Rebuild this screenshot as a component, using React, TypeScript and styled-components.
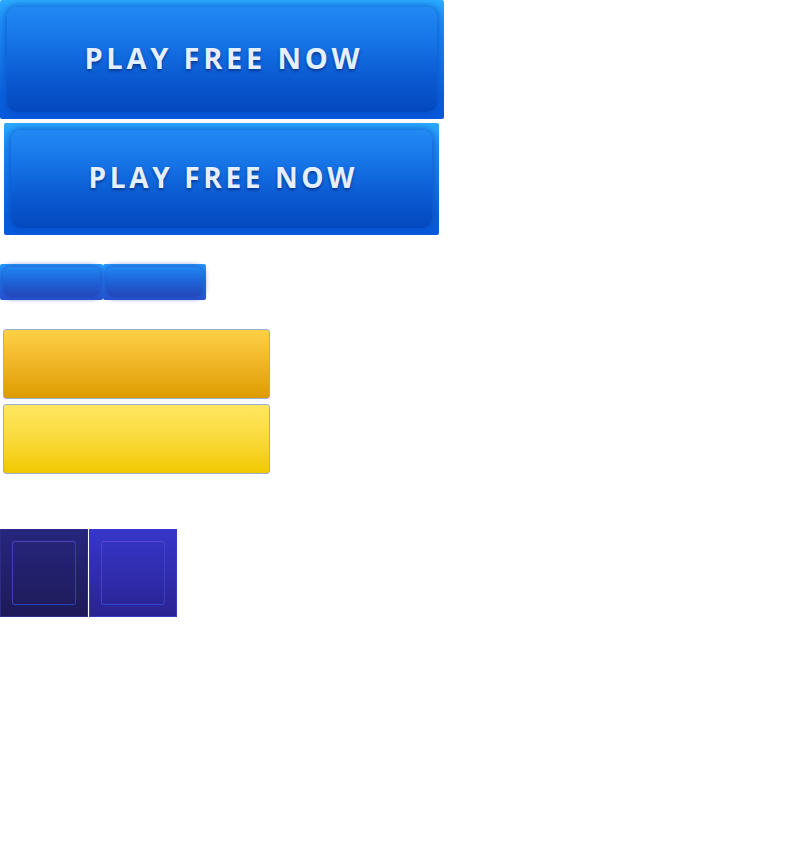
import styled, { createGlobalStyle } from "styled-components";

const GlobalStyle = createGlobalStyle`
  html, body {
    margin: 0;
    padding: 0;
    background: #ffffff;
    font-family: "Open Sans", "Noto Sans", sans-serif;
  }
`;

const Sheet = styled.div`
  display: flex;
  flex-direction: column;
  align-items: flex-start;
`;

const BigButton = styled.div<{ $w: number; $h: number; $mt: number; $ml: number; $size: number }>`
  box-sizing: border-box;
  width: ${({ $w }) => $w}px;
  height: ${({ $h }) => $h}px;
  margin-top: ${({ $mt }) => $mt}px;
  margin-left: ${({ $ml }) => $ml}px;
  padding: 7px;
  border-radius: 2px;
  background: linear-gradient(180deg, #2aabff 0%, #1e8cf6 20%, #0a62dc 80%, #0659dc 100%);
  display: flex;
  font-size: ${({ $size }) => $size}px;
`;

const BigInner = styled.div`
  flex: 1;
  border-radius: 10px;
  background: linear-gradient(180deg, #2289f4 0%, #1573e6 35%, #0a58d0 70%, #0448be 100%);
  box-shadow: 0 0 6px 2px rgba(8, 70, 190, 0.55);
  display: flex;
  align-items: center;
  justify-content: center;
  padding-bottom: 4px;
`;

const Label = styled.span`
  font-weight: 700;
  letter-spacing: 0.13em;
  color: #e4f0ff;
  text-shadow: 0 2px 3px rgba(0, 20, 90, 0.55);
  line-height: 1;
  margin-left: 0.13em;
`;

const SmallRow = styled.div`
  display: flex;
  margin-top: 29px;
`;

const SmallButton = styled.div`
  box-sizing: border-box;
  width: 103px;
  height: 36px;
  padding: 3px;
  border-radius: 2px;
  background: linear-gradient(180deg, #239dff 0%, #1e7cec 45%, #2652d0 100%);
  display: flex;
`;

const SmallInner = styled.div`
  flex: 1;
  border-radius: 8px;
  background: linear-gradient(180deg, #1f86f2 0%, #1e62d8 50%, #2446b8 100%);
  box-shadow: 0 0 5px 2px rgba(36, 70, 190, 0.6);
`;

const GoldBar = styled.div<{ $mt: number; $top: string; $mid: string; $bottom: string }>`
  box-sizing: border-box;
  width: 267px;
  height: 70px;
  margin-top: ${({ $mt }) => $mt}px;
  margin-left: 3px;
  border: 1px solid #98aed0;
  border-radius: 3px;
  background: linear-gradient(180deg, ${({ $top }) => $top} 0%, ${({ $mid }) => $mid} 50%, ${({ $bottom }) => $bottom} 100%);
`;

const TileRow = styled.div`
  display: flex;
  gap: 1px;
  margin-top: 55px;
`;

const Tile = styled.div<{ $top: string; $bottom: string; $edge: string }>`
  box-sizing: border-box;
  width: 88px;
  height: 88px;
  padding: 11px;
  border: 1px solid ${({ $edge }) => $edge};
  background: linear-gradient(180deg, ${({ $top }) => $top} 0%, ${({ $bottom }) => $bottom} 100%);
  display: flex;
`;

const TileFrame = styled.div`
  flex: 1;
  border-radius: 3px;
  border: 1px solid #4a46cc;
  border-top-color: #6a4fd8;
  border-bottom-color: #2a58e4;
  border-left-color: #5a48d4;
  border-right-color: #3d4ad4;
  opacity: 0.7;
`;

export default function App() {
  return (
    <>
      <GlobalStyle />
      <Sheet>
        <BigButton $w={444} $h={119} $mt={0} $ml={0} $size={29}>
          <BigInner>
            <Label>PLAY FREE NOW</Label>
          </BigInner>
        </BigButton>
        <BigButton $w={435} $h={112} $mt={4} $ml={4} $size={28}>
          <BigInner>
            <Label>PLAY FREE NOW</Label>
          </BigInner>
        </BigButton>
        <SmallRow>
          <SmallButton>
            <SmallInner />
          </SmallButton>
          <SmallButton>
            <SmallInner />
          </SmallButton>
        </SmallRow>
        <GoldBar $mt={29} $top="#fed045" $mid="#f0b526" $bottom="#dd9b00" />
        <GoldBar $mt={5} $top="#ffe661" $mid="#f9da3c" $bottom="#f1c800" />
        <TileRow>
          <Tile $top="#26267e" $bottom="#1e1a58" $edge="#2c2c86">
            <TileFrame />
          </Tile>
          <Tile $top="#3636ca" $bottom="#2a2392" $edge="#3a3ac8">
            <TileFrame />
          </Tile>
        </TileRow>
      </Sheet>
    </>
  );
}
